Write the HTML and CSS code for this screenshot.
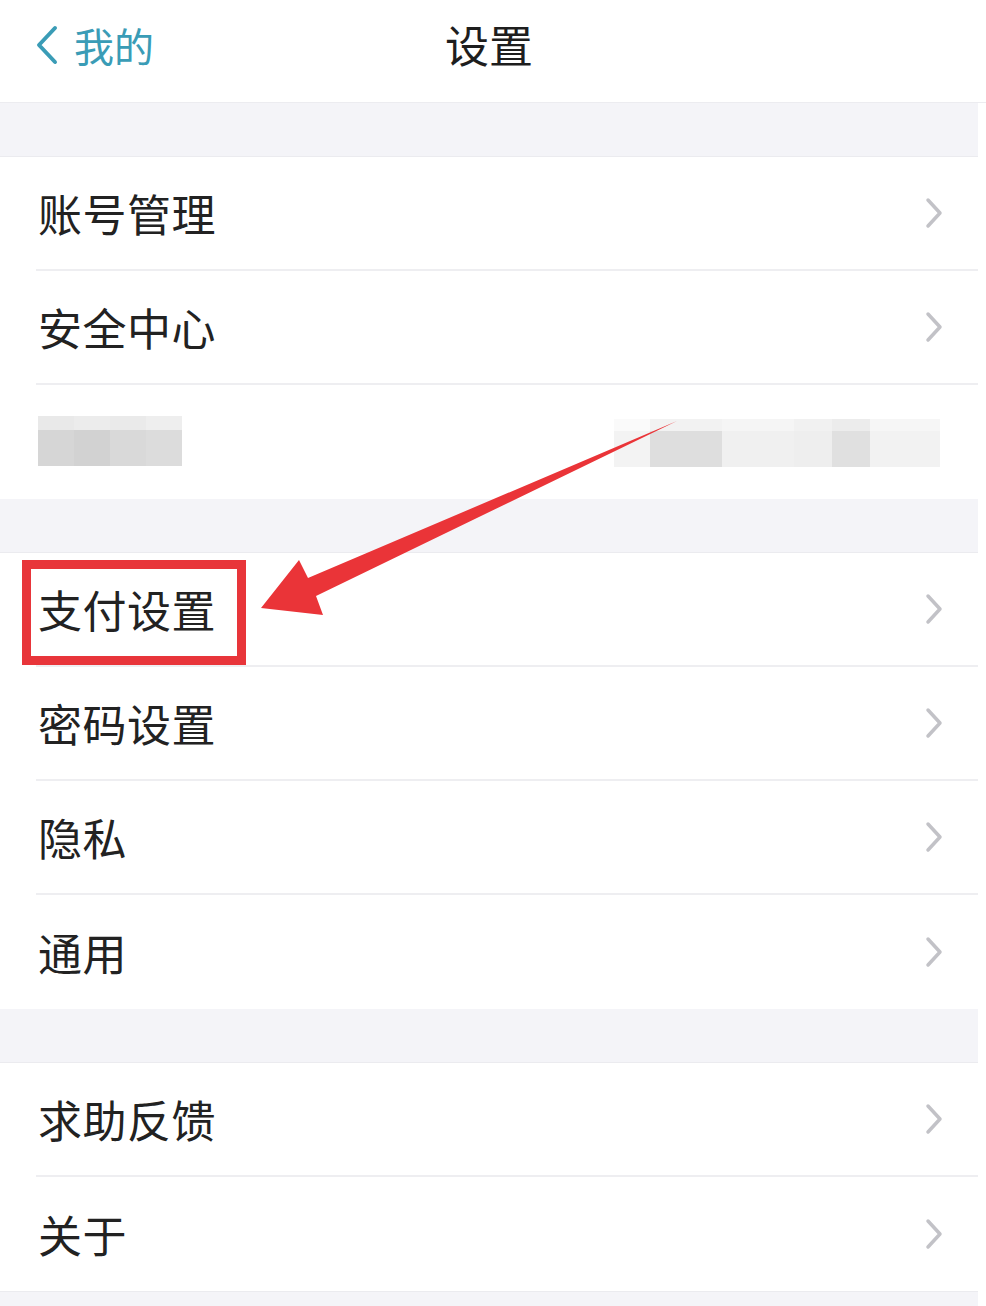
FILE: index.html
```html
<!DOCTYPE html>
<html lang="zh-CN">
<head>
<meta charset="utf-8">
<title>设置</title>
<link rel="stylesheet" href="styles.css">
</head>
<body>
<div class="page">
  <header class="nav">
    <div class="back">
      <svg class="back-icon" width="26" height="40" viewBox="0 0 26 40"><polyline points="21,3 5,20 21,37" fill="none" stroke="#3a9cb6" stroke-width="4" stroke-linecap="round" stroke-linejoin="round"/></svg>
      <span class="back-text">我的</span>
    </div>
    <div class="title">设置</div>
  </header>

  <div class="band"></div>
  <section class="group">
    <div class="row"><div class="row-inner"><span class="label">账号管理</span><svg class="chev" width="20" height="34" viewBox="0 0 20 34"><polyline points="4,4 16,17 4,30" fill="none" stroke="#c2c2c7" stroke-width="3.5" stroke-linecap="round" stroke-linejoin="round"/></svg></div></div>
    <div class="row"><div class="row-inner"><span class="label">安全中心</span><svg class="chev" width="20" height="34" viewBox="0 0 20 34"><polyline points="4,4 16,17 4,30" fill="none" stroke="#c2c2c7" stroke-width="3.5" stroke-linecap="round" stroke-linejoin="round"/></svg></div></div>
    <div class="row"><div class="row-inner last blurred">
      <div class="blur-left"><i class="b1"></i><i class="b2"></i><i class="b3"></i><i class="b4"></i></div>
      <div class="blur-right"><i class="r1"></i><i class="r2"></i><i class="r3"></i><i class="r4"></i><i class="r5"></i><i class="r6"></i></div>
    </div></div>
  </section>

  <div class="band"></div>
  <section class="group">
    <div class="row"><div class="row-inner"><span class="label">支付设置</span><svg class="chev" width="20" height="34" viewBox="0 0 20 34"><polyline points="4,4 16,17 4,30" fill="none" stroke="#c2c2c7" stroke-width="3.5" stroke-linecap="round" stroke-linejoin="round"/></svg></div></div>
    <div class="row"><div class="row-inner"><span class="label">密码设置</span><svg class="chev" width="20" height="34" viewBox="0 0 20 34"><polyline points="4,4 16,17 4,30" fill="none" stroke="#c2c2c7" stroke-width="3.5" stroke-linecap="round" stroke-linejoin="round"/></svg></div></div>
    <div class="row"><div class="row-inner"><span class="label">隐私</span><svg class="chev" width="20" height="34" viewBox="0 0 20 34"><polyline points="4,4 16,17 4,30" fill="none" stroke="#c2c2c7" stroke-width="3.5" stroke-linecap="round" stroke-linejoin="round"/></svg></div></div>
    <div class="row"><div class="row-inner last"><span class="label">通用</span><svg class="chev" width="20" height="34" viewBox="0 0 20 34"><polyline points="4,4 16,17 4,30" fill="none" stroke="#c2c2c7" stroke-width="3.5" stroke-linecap="round" stroke-linejoin="round"/></svg></div></div>
  </section>

  <div class="band"></div>
  <section class="group">
    <div class="row"><div class="row-inner"><span class="label">求助反馈</span><svg class="chev" width="20" height="34" viewBox="0 0 20 34"><polyline points="4,4 16,17 4,30" fill="none" stroke="#c2c2c7" stroke-width="3.5" stroke-linecap="round" stroke-linejoin="round"/></svg></div></div>
    <div class="row"><div class="row-inner last"><span class="label">关于</span><svg class="chev" width="20" height="34" viewBox="0 0 20 34"><polyline points="4,4 16,17 4,30" fill="none" stroke="#c2c2c7" stroke-width="3.5" stroke-linecap="round" stroke-linejoin="round"/></svg></div></div>
  </section>
  <div class="band-end"></div>

  <svg class="annotation" width="986" height="1306" viewBox="0 0 986 1306">
    <rect x="26.5" y="564.5" width="215" height="96" fill="none" stroke="#e8353a" stroke-width="9"/>
    <polygon points="261,608 299,560 308,578 677,421 316,596 323,615" fill="#ea3438"/>
  </svg>
</div>
</body>
</html>
```

FILE: styles.css
```css
html, body {
  margin: 0;
  padding: 0;
  background: #ffffff;
}

.page {
  position: relative;
  width: 986px;
  height: 1306px;
  overflow: hidden;
  display: flex;
  flex-direction: column;
  font-family: "Noto Sans CJK SC", "Noto Sans", sans-serif;
  color: #222222;
}

.nav {
  position: relative;
  height: 103px;
  flex: 0 0 103px;
  display: flex;
  align-items: center;
  justify-content: center;
  background: #ffffff;
  border-bottom: 1px solid #ececf0;
  box-sizing: border-box;
}

.back {
  position: absolute;
  left: 34px;
  top: 22px;
  display: flex;
  align-items: center;
  gap: 14px;
}

.back-text {
  font-size: 40px;
  color: #3a9cb6;
  line-height: 46px;
}

.title {
  font-size: 44px;
  line-height: 52px;
  color: #1e1e1e;
  margin-top: -14px;
  margin-right: 8px;
}

.band {
  flex: 0 0 54px;
  height: 54px;
  background: #f4f4f8;
  border-bottom: 1px solid #ebebef;
  box-sizing: border-box;
  margin-right: 8px;
}

.band-end {
  flex: 1 1 auto;
  background: #f4f4f8;
  border-top: 1px solid #ebebef;
  margin-right: 8px;
}

.group {
  display: flex;
  flex-direction: column;
  background: #ffffff;
}

.row {
  height: 114px;
  flex: 0 0 114px;
  padding-left: 36px;
  box-sizing: border-box;
}

.row-inner {
  height: 100%;
  display: flex;
  align-items: center;
  justify-content: space-between;
  border-bottom: 2px solid #eeeef1;
  box-sizing: border-box;
  padding-left: 2px;
  padding-right: 34px;
  margin-right: 8px;
}

.row-inner.last {
  border-bottom: none;
}

.label {
  font-size: 44px;
  line-height: 52px;
  color: #222222;
  letter-spacing: 0.5px;
}

.chev {
  display: block;
}

.blurred {
  align-items: center;
  padding-right: 38px;
}

.blur-left {
  display: flex;
  width: 144px;
  height: 50px;
  margin-top: -2px;
}

.blur-left i {
  display: block;
  flex: 1;
  height: 100%;
}

.b1 { background: linear-gradient(#e9e9e9 0 28%, #d6d6d6 28%); }
.b2 { background: linear-gradient(#ececec 0 28%, #d2d2d2 28%); }
.b3 { background: linear-gradient(#eaeaea 0 28%, #d9d9d9 28%); }
.b4 { background: linear-gradient(#eeeeee 0 28%, #dcdcdc 28%); }

.blur-right {
  display: flex;
  width: 326px;
  height: 48px;
  margin-top: 2px;
}

.blur-right i {
  display: block;
  height: 100%;
}

.r1 { width: 36px; background: linear-gradient(#fafafa 0 25%, #f3f3f3 25%); }
.r2 { width: 72px; background: linear-gradient(#f2f2f2 0 25%, #dedede 25%); }
.r3 { width: 72px; background: linear-gradient(#f5f5f5 0 25%, #f0f0f0 25%); }
.r4 { width: 38px; background: linear-gradient(#f1f1f1 0 25%, #eeeeee 25%); }
.r5 { width: 38px; background: linear-gradient(#ececec 0 25%, #e0e0e0 25%); }
.r6 { width: 70px; background: linear-gradient(#f6f6f6 0 25%, #f2f2f2 25%); }

.annotation {
  position: absolute;
  left: 0;
  top: 0;
  pointer-events: none;
}
```
